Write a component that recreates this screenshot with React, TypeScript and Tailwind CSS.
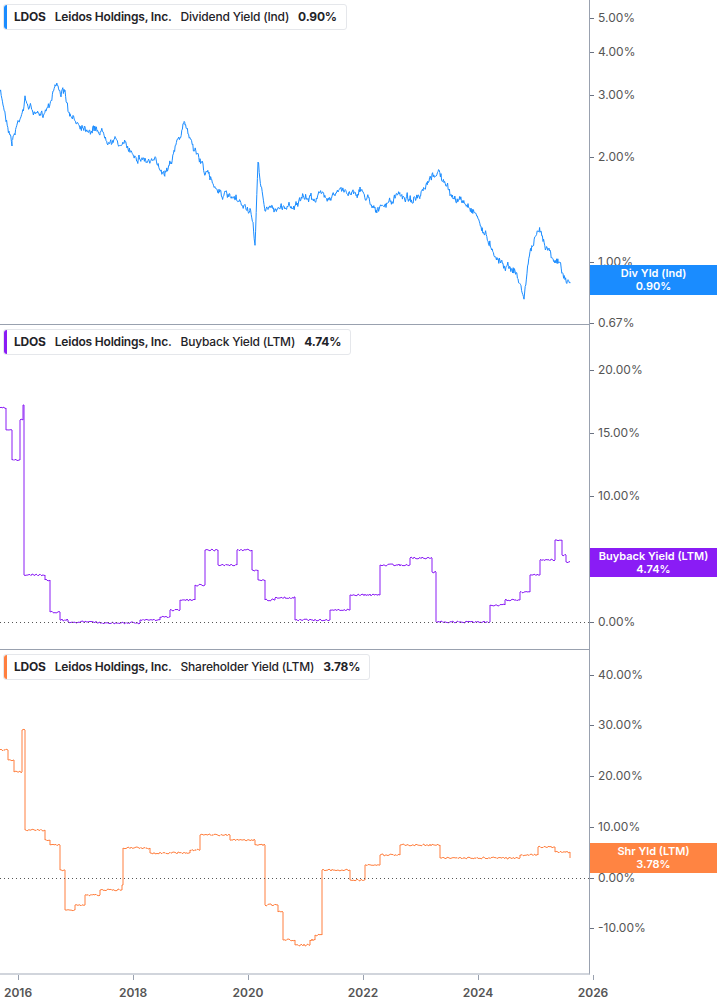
import React from "react";

type Pt = [number, number];

function rng(seed: number) {
  let s = seed;
  return () => {
    s = (s * 16807) % 2147483647;
    return s / 2147483647;
  };
}

// noisy continuous line through key points
function noisyPath(pts: Pt[], amp: number, seed: number) {
  const r = rng(seed);
  let d = "";
  let drift = 0;
  for (let i = 0; i < pts.length - 1; i++) {
    const [x0, y0] = pts[i];
    const [x1, y1] = pts[i + 1];
    for (let x = x0; x < x1; x += 0.6) {
      const t = (x - x0) / (x1 - x0);
      drift = drift * 0.85 + (r() - 0.5) * amp;
      const y = y0 + (y1 - y0) * t + drift + (r() - 0.5) * amp * 0.9;
      d += `${d ? "L" : "M"}${x.toFixed(1)},${y.toFixed(1)}`;
    }
  }
  const last = pts[pts.length - 1];
  return d + `L${last[0]},${last[1]}`;
}

// step line: hold level, then jump, with small jitter
function stepPath(pts: Pt[], amp: number, seed: number) {
  const r = rng(seed);
  let d = `M${pts[0][0]},${pts[0][1]}`;
  for (let i = 0; i < pts.length - 1; i++) {
    const [x0, y0] = pts[i];
    const [x1, y1] = pts[i + 1];
    for (let x = x0 + 1; x < x1; x += 1) {
      d += `L${x},${(y0 + (r() - 0.5) * amp).toFixed(1)}`;
    }
    d += `L${x1},${y0}L${x1},${y1}`;
  }
  return d;
}

const div1: Pt[] = [
  [0, 92], [12, 140], [25, 100], [40, 120], [50, 100], [55, 82], [65, 95], [70, 120], [100, 130], [130, 150],
  [165, 170], [185, 125], [200, 160], [210, 180], [230, 200], [250, 210], [255, 245], [258, 165], [265, 210],
  [290, 205], [320, 195], [360, 190], [380, 210], [400, 195], [420, 200], [438, 170], [450, 195], [475, 210],
  [485, 235], [500, 260], [515, 270], [524, 297], [530, 250], [540, 232], [550, 250], [560, 265], [565, 282], [570, 282],
];

const buy: Pt[] = [
  [0, 408], [6, 430], [12, 460], [20, 420], [23, 405], [24, 575], [45, 580], [50, 612], [60, 620], [68, 622],
  [100, 623], [140, 620], [160, 617], [170, 610], [180, 600], [195, 585], [205, 550], [218, 565], [237, 550],
  [252, 570], [258, 580], [265, 600], [275, 598], [294, 597], [295, 620], [330, 610], [350, 595], [380, 565],
  [410, 558], [432, 572], [436, 622], [480, 622], [490, 605], [505, 600], [520, 592], [530, 575], [540, 560],
  [555, 540], [562, 555], [566, 562], [570, 562],
];

const shr: Pt[] = [
  [0, 750], [8, 760], [14, 772], [22, 730], [25, 830], [45, 840], [50, 845], [60, 870], [65, 910], [75, 905],
  [85, 895], [100, 890], [122, 885], [123, 848], [150, 853], [190, 850], [200, 835], [230, 840], [255, 845],
  [265, 905], [278, 912], [283, 940], [295, 945], [310, 940], [315, 935], [322, 870], [338, 870], [350, 880],
  [365, 865], [380, 855], [400, 845], [435, 845], [440, 858], [480, 858], [520, 855], [538, 847], [555, 852], [570, 858],
];

function Legend({ color, label, value }: { color: string; label: string; value: string }) {
  return (
    <div className="absolute left-[3px] top-[4px] flex h-[26px] items-center gap-[9px] rounded-[3px] border border-gray-200 bg-white pl-[10px] pr-[9px] text-[12px] font-semibold tracking-[-0.2px] text-[#1f2328]">
      <span className={`absolute left-0 top-0 h-full w-[3px] rounded-l-[3px] ${color}`} />
      <span className="font-bold">LDOS</span>
      <span>Leidos Holdings, Inc.</span>
      <span className="font-medium">{label}</span>
      <span className="font-bold">{value}</span>
    </div>
  );
}

function Tick({ y, label }: { y: number; label: string }) {
  return (
    <div className="absolute left-0 flex items-center" style={{ top: y - 8 }}>
      <span className="h-px w-[4px] bg-gray-500" />
      <span className="ml-[4px] text-[12px] leading-4 text-[#555]">{label}</span>
    </div>
  );
}

export default function App() {
  const years = ["2016", "2018", "2020", "2022", "2024", "2026"];
  return (
    <div className="relative h-[1005px] w-[717px] overflow-hidden bg-white" style={{ fontFamily: "Inter, 'Liberation Sans', sans-serif" }}>
      <svg className="absolute left-0 top-0" width="590" height="975">
        <path d={noisyPath(div1, 5, 7)} fill="none" stroke="#1a8cff" strokeWidth="1" />
        <path d={stepPath(buy, 2, 11)} fill="none" stroke="#8a1cf5" strokeWidth="1" />
        <path d={stepPath(shr, 2, 5)} fill="none" stroke="#ff7f3f" strokeWidth="1" />
        <line x1="0" y1="622.5" x2="590" y2="622.5" stroke="#555" strokeDasharray="1 3" />
        <line x1="0" y1="878.5" x2="590" y2="878.5" stroke="#555" strokeDasharray="1 3" />
      </svg>

      {/* panel 1 */}
      <div className="flex h-[325px]">
        <div className="relative w-[590px] border-b border-r border-gray-400">
          <Legend color="bg-[#1a8cff]" label="Dividend Yield (Ind)" value="0.90%" />
        </div>
        <div className="relative flex-1">
          <Tick y={18} label="5.00%" />
          <Tick y={52} label="4.00%" />
          <Tick y={95} label="3.00%" />
          <Tick y={157} label="2.00%" />
          <Tick y={262} label="1.00%" />
          <Tick y={289} label="0.84%" />
          <Tick y={323} label="0.67%" />
          <div className="absolute left-0 right-0 top-[265px] flex h-[30px] flex-col items-center justify-center bg-[#1a8cff] text-[11px] font-semibold leading-[13px] text-white">
            <span>Div Yld (Ind)</span>
            <span>0.90%</span>
          </div>
        </div>
      </div>

      {/* panel 2 */}
      <div className="flex h-[325px]">
        <div className="relative w-[590px] border-b border-r border-gray-400">
          <Legend color="bg-[#8a1cf5]" label="Buyback Yield (LTM)" value="4.74%" />
        </div>
        <div className="relative flex-1">
          <Tick y={45} label="20.00%" />
          <Tick y={108} label="15.00%" />
          <Tick y={171} label="10.00%" />
          <Tick y={297} label="0.00%" />
          <div className="absolute left-0 right-0 top-[223px] flex h-[29px] flex-col items-center justify-center bg-[#8a1cf5] text-[11px] font-semibold leading-[13px] text-white">
            <span>Buyback Yield (LTM)</span>
            <span>4.74%</span>
          </div>
        </div>
      </div>

      {/* panel 3 */}
      <div className="flex h-[325px]">
        <div className="relative w-[590px] border-b-2 border-r border-b-gray-300 border-r-gray-400">
          <Legend color="bg-[#ff7f3f]" label="Shareholder Yield (LTM)" value="3.78%" />
        </div>
        <div className="relative flex-1">
          <Tick y={25} label="40.00%" />
          <Tick y={75} label="30.00%" />
          <Tick y={126} label="20.00%" />
          <Tick y={177} label="10.00%" />
          <Tick y={228} label="0.00%" />
          <Tick y={278} label="-10.00%" />
          <div className="absolute left-0 right-0 top-[193px] flex h-[30px] flex-col items-center justify-center bg-[#ff8442] text-[11px] font-semibold leading-[13px] text-white">
            <span>Shr Yld (LTM)</span>
            <span>3.78%</span>
          </div>
        </div>
      </div>

      {/* x axis */}
      <div className="relative h-[30px] w-[600px]">
        {years.map((y, i) => (
          <div key={y} className="absolute top-0 flex flex-col items-center" style={{ left: 18 + i * 115 - 15, width: 30 }}>
            <span className="h-[5px] w-px bg-gray-400" />
            <span className="mt-[5px] text-[12px] font-semibold leading-4 text-[#555]">{y}</span>
          </div>
        ))}
      </div>
    </div>
  );
}
